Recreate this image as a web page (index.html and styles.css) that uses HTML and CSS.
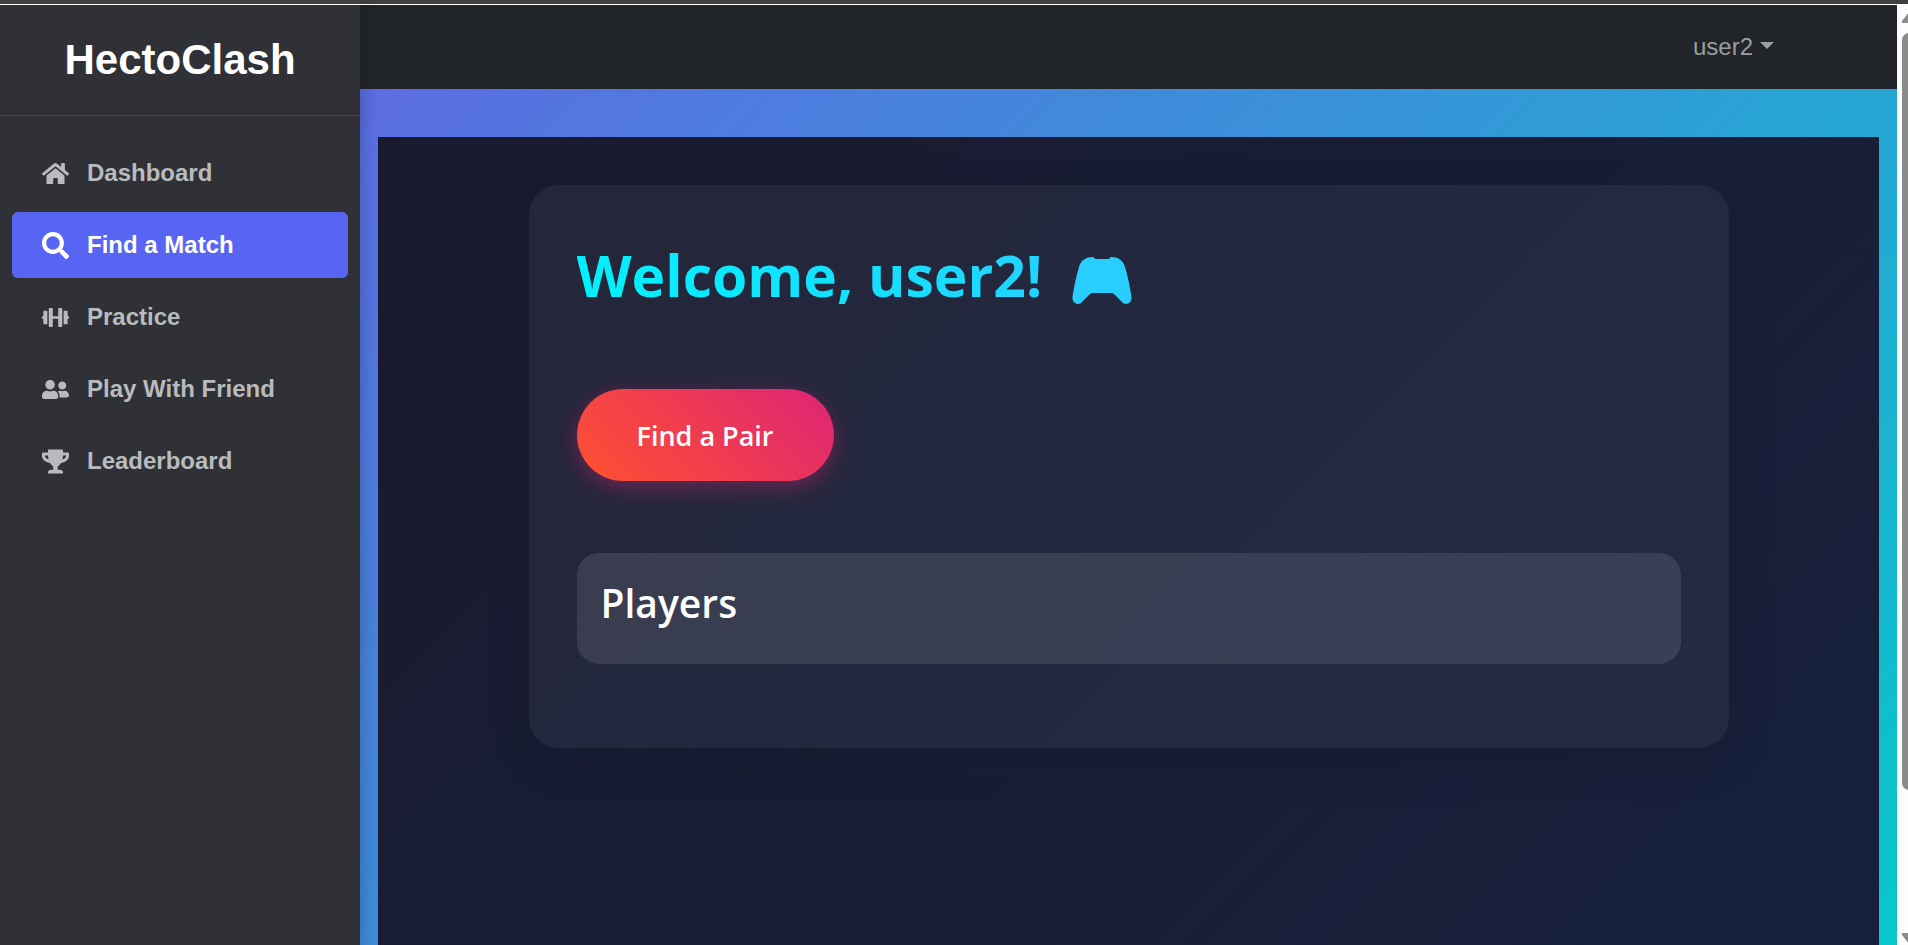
FILE: index.html
```html
<!DOCTYPE html>
<html lang="en">
<head>
  <meta charset="utf-8">
  <title>HectoClash</title>
  <link rel="stylesheet" href="styles.css">
</head>
<body>
  <div class="window-edge"></div>
  <div class="viewport">
    <div class="page">
      <aside class="sidebar">
        <div class="brand">HectoClash</div>
        <nav class="nav">
          <a class="nav-link" href="#dashboard">
            <svg class="nav-icon" viewBox="0 0 576 512" aria-hidden="true"><path d="M280.37 148.26L96 300.11V464a16 16 0 0 0 16 16l112.06-.29a16 16 0 0 0 15.92-16V368a16 16 0 0 1 16-16h64a16 16 0 0 1 16 16v95.64a16 16 0 0 0 16 16.05L464 480a16 16 0 0 0 16-16V300L295.67 148.26a12.19 12.19 0 0 0-15.3 0zM571.6 251.47L488 182.56V44.05a12 12 0 0 0-12-12h-56a12 12 0 0 0-12 12v72.61L318.47 43a48 48 0 0 0-61 0L4.34 251.47a12 12 0 0 0-1.6 16.9l25.5 31A12 12 0 0 0 45.15 301l235.22-193.74a12.19 12.19 0 0 1 15.3 0L530.9 301a12 12 0 0 0 16.9-1.6l25.5-31a12 12 0 0 0-1.7-16.93z"/></svg>
            Dashboard
          </a>
          <a class="nav-link active" href="#match" aria-current="page">
            <svg class="nav-icon" viewBox="0 0 512 512" aria-hidden="true"><path d="M505 442.7L405.3 343c-4.5-4.5-10.6-7-17-7H372c27.6-35.3 44-79.7 44-128C416 93.1 322.9 0 208 0S0 93.1 0 208s93.1 208 208 208c48.3 0 92.7-16.4 128-44v16.3c0 6.4 2.5 12.5 7 17l99.7 99.7c9.4 9.4 24.6 9.4 33.9 0l28.3-28.3c9.4-9.4 9.4-24.6.1-34zM208 336c-70.7 0-128-57.2-128-128 0-70.7 57.2-128 128-128 70.7 0 128 57.2 128 128 0 70.7-57.2 128-128 128z"/></svg>
            Find a Match
          </a>
          <a class="nav-link" href="#practice">
            <svg class="nav-icon" viewBox="0 0 640 512" aria-hidden="true"><path d="M104 96H56c-13.3 0-24 10.7-24 24v104H8c-4.4 0-8 3.6-8 8v48c0 4.4 3.6 8 8 8h24v104c0 13.3 10.7 24 24 24h48c13.3 0 24-10.7 24-24V120c0-13.3-10.7-24-24-24zm528 128h-24V120c0-13.3-10.7-24-24-24h-48c-13.3 0-24 10.7-24 24v272c0 13.3 10.7 24 24 24h48c13.3 0 24-10.7 24-24V288h24c4.4 0 8-3.6 8-8v-48c0-4.4-3.6-8-8-8zM456 32h-48c-13.3 0-24 10.7-24 24v168H256V56c0-13.3-10.7-24-24-24h-48c-13.3 0-24 10.7-24 24v400c0 13.3 10.7 24 24 24h48c13.3 0 24-10.7 24-24V288h128v168c0 13.3 10.7 24 24 24h48c13.3 0 24-10.7 24-24V56c0-13.3-10.7-24-24-24z"/></svg>
            Practice
          </a>
          <a class="nav-link" href="#friend">
            <svg class="nav-icon" viewBox="0 0 640 512" aria-hidden="true"><path d="M192 256c61.9 0 112-50.1 112-112S253.9 32 192 32 80 82.1 80 144s50.1 112 112 112zm76.8 32h-8.3c-20.8 10-43.9 16-68.5 16s-47.6-6-68.5-16h-8.3C51.6 288 0 339.6 0 403.2V432c0 26.5 21.5 48 48 48h288c26.5 0 48-21.5 48-48v-28.8c0-63.6-51.6-115.2-115.2-115.2zM480 256c53 0 96-43 96-96s-43-96-96-96-96 43-96 96 43 96 96 96zm48 32h-3.8c-13.9 4.8-28.6 8-44.2 8s-30.3-3.2-44.2-8H432c-20.4 0-39.2 5.9-55.7 15.4 24.4 26.3 39.7 61.2 39.7 99.8v38.4c0 2.2-.5 4.3-.6 6.4H592c26.5 0 48-21.5 48-48 0-61.9-50.1-112-112-112z"/></svg>
            Play With Friend
          </a>
          <a class="nav-link" href="#leaderboard">
            <svg class="nav-icon" viewBox="0 0 576 512" aria-hidden="true"><path d="M552 64H448V24c0-13.3-10.7-24-24-24H152c-13.3 0-24 10.7-24 24v40H24C10.7 64 0 74.7 0 88v56c0 35.7 22.5 72.4 61.9 100.7 31.5 22.7 69.8 37.1 110 41.7C203.3 338.5 240 360 240 360v72h-48c-35.3 0-64 20.7-64 56v12c0 6.6 5.4 12 12 12h296c6.6 0 12-5.4 12-12v-12c0-35.3-28.7-56-64-56h-48v-72s36.7-21.5 68.1-73.6c40.3-4.6 78.6-19 110-41.7 39.3-28.3 61.9-65 61.9-100.7V88c0-13.3-10.7-24-24-24zM99.3 192.8C74.9 175.2 64 155.6 64 144v-16h64.2c1 32.6 5.8 61.2 12.8 86.2-15.1-5.2-29.2-12.4-41.7-21.4zM512 144c0 16.1-17.7 36.1-35.3 48.8-12.5 9-26.7 16.2-41.8 21.4 7-25 11.8-53.6 12.8-86.2H512v16z"/></svg>
            Leaderboard
          </a>
        </nav>
      </aside>
      <div class="content">
        <header class="topbar">
          <button class="user-menu" type="button" aria-haspopup="true">user2<span class="caret"></span></button>
        </header>
        <div class="stage">
          <main class="arena">
            <section class="card">
              <h1 class="welcome">
                <span class="welcome-text">Welcome, user2!</span>
                <svg class="gamepad" viewBox="0 0 60 48" aria-hidden="true"><path d="M21 0C22 0 22 2 24 2H36C38 2 38 0 39 0C46 0 51 3 53 10C56 20 58 30 59.500 40C60 45 56 47 54 47C52 47 51 46 50 45L42 37Q41 36 39 36H21Q19 36 18 37L10 45C9 46 8 47 6 47C4 47 0 45 .500 40C2 30 4 20 7 10C9 3 14 0 21 0Z"/></svg>
              </h1>
              <button class="pair-button" type="button">Find a Pair</button>
              <section class="players">
                <h2 class="players-title">Players</h2>
              </section>
            </section>
          </main>
        </div>
      </div>
    </div>
    <div class="scrollbar" aria-hidden="true">
      <svg class="arrow" viewBox="0 0 18 12"><path d="M8 1Q9 0 10 1L17 10Q18 12 16 12H2Q0 12 1 10Z"/></svg>
      <div class="track"><div class="thumb"></div></div>
      <svg class="arrow" viewBox="0 0 18 12"><path d="M8 11Q9 12 10 11L17 2Q18 0 16 0H2Q0 0 1 2Z"/></svg>
    </div>
  </div>
</body>
</html>
```
FILE: styles.css
```css
* {
  box-sizing: border-box;
}

body {
  margin: 0;
  height: 100vh;
  overflow: hidden;
  display: flex;
  flex-direction: column;
  font-family: "Liberation Sans", Arial, sans-serif;
  font-size: 24px;
  background: #3f3f3f;
}

.window-edge {
  flex: none;
  height: 5px;
  background: #3f3f3f;
  border-bottom: 1px solid #fff;
}

.viewport {
  flex: 1;
  min-height: 0;
  display: flex;
  overflow: hidden;
}

.page {
  flex: 1;
  min-width: 0;
  min-height: 120vh;
  align-self: flex-start;
  display: flex;
  background: linear-gradient(135deg, #6c5ce7, #00cec9);
}

.sidebar {
  flex: none;
  width: 360px;
  z-index: 1;
  background: #2f3136;
  box-shadow: 3px 0 15px rgba(0, 0, 0, 0.2);
}

.brand {
  padding: 24px;
  border-bottom: 1px solid rgba(255, 255, 255, 0.1);
  color: #fff;
  font-size: 42px;
  font-weight: 700;
  line-height: 62px;
  text-align: center;
}

.nav {
  display: flex;
  flex-direction: column;
  gap: 6px;
  padding: 24px 12px;
}

.nav-link {
  display: flex;
  align-items: center;
  gap: 18px;
  height: 66px;
  padding: 0 30px;
  border-radius: 6px;
  color: #b9bbbe;
  font-weight: 700;
  text-decoration: none;
}

.nav-link.active {
  background: #5865f2;
  color: #fff;
}

.nav-icon {
  width: 27px;
  height: 27px;
  fill: currentColor;
}

.content {
  flex: 1;
  min-width: 0;
  display: flex;
  flex-direction: column;
}

.topbar {
  height: 84px;
  display: flex;
  justify-content: flex-end;
  align-items: center;
  padding: 0 123px 0 0;
  background: #212529;
}

.user-menu {
  display: flex;
  align-items: center;
  gap: 7px;
  padding: 0;
  border: 0;
  background: none;
  color: #9b9d9f;
  font: inherit;
  line-height: 36px;
}

.caret {
  margin-bottom: 3px;
  border-top: 7px solid;
  border-left: 7px solid transparent;
  border-right: 7px solid transparent;
}

.stage {
  flex: 1;
  display: flex;
  padding: 48px 18px 0;
}

.arena {
  flex: 1;
  padding: 48px;
  background: linear-gradient(135deg, #1a1a2e, #16213e);
  color: #fff;
  font-family: "Segoe UI", "Open Sans", sans-serif;
}

.card {
  max-width: 1200px;
  margin: 0 auto;
  padding: 48px 48px 84px;
  border-radius: 30px;
  background: rgba(255, 255, 255, 0.05);
  box-shadow: 0 12px 48px rgba(0, 0, 0, 0.1);
}

.welcome {
  display: flex;
  align-items: center;
  gap: 30px;
  margin: 0 0 78px;
  padding-top: 6px;
  font-size: 57px;
  font-weight: 700;
  line-height: 72px;
  color: transparent;
  background: linear-gradient(45deg, #00f2fe, #4facfe);
  background-clip: text;
  -webkit-background-clip: text;
}

.gamepad {
  width: 60px;
  height: 48px;
  margin-top: 12px;
  fill: #28ceff;
}

.pair-button {
  display: block;
  height: 92px;
  padding: 0 60px;
  border: 0;
  border-radius: 46px;
  background: linear-gradient(45deg, #ff512f, #dd2476);
  box-shadow: 0 6px 22px rgba(221, 36, 118, 0.4);
  color: #fff;
  font: inherit;
  font-size: 27px;
  font-weight: 600;
}

.players {
  margin-top: 72px;
  padding: 24px 24px 36px;
  border-radius: 22px;
  background: rgba(255, 255, 255, 0.1);
}

.players-title {
  margin: 0;
  font-size: 39px;
  font-weight: 600;
  line-height: 51px;
}

.scrollbar {
  flex: none;
  width: 11px;
  display: flex;
  flex-direction: column;
  gap: 10px;
  padding: 6px 0 0 4px;
  overflow: hidden;
  background: #fcfcfc;
}

.arrow {
  flex: none;
  width: 18px;
  height: 12px;
  fill: #8b8b8b;
}

.track {
  flex: 1;
}

.thumb {
  width: 18px;
  height: 85%;
  margin-left: 1px;
  border-radius: 7px;
  background: #8b8b8b;
}
```
